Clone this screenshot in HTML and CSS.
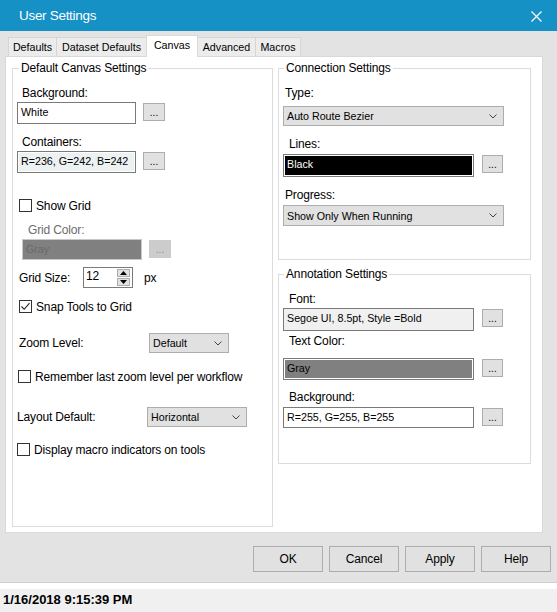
FILE: index.html
```html
<!DOCTYPE html>
<html lang="en">
<head>
  <meta charset="UTF-8" />
  <title>User Settings</title>
  <link rel="stylesheet" href="styles.css">
</head>
<body>

  <div class="titlebar">
    <span class="title">User Settings</span>
    <svg class="close" width="11" height="11" viewBox="0 0 11 11"><path d="M0.5 0.5 L10.5 10.5 M10.5 0.5 L0.5 10.5" stroke="#fff" stroke-width="1.2" fill="none"/></svg>
  </div>

  <div class="dialog">
    <div class="tabs">
      <div class="tab tab-defaults">Defaults</div>
      <div class="tab tab-dataset">Dataset Defaults</div>
      <div class="tab tab-canvas active">Canvas</div>
      <div class="tab tab-advanced">Advanced</div>
      <div class="tab tab-macros">Macros</div>
    </div>

    <div class="panel">
      <div class="group group-canvas">
        <div class="legend legend-left">Default Canvas Settings</div>

        <div class="lbl lbl-bg">Background:</div>
        <div class="field-row fr-bg">
          <div class="colorbox box-white w119">White</div>
          <div class="dots">...</div>
        </div>

        <div class="lbl lbl-bg">Containers:</div>
        <div class="field-row fr-bg">
          <div class="colorbox box-containers w119">R=236, G=242, B=242</div>
          <div class="dots">...</div>
        </div>

        <div class="check-row cr-showgrid">
          <span class="check"></span>
          <span>Show Grid</span>
        </div>

        <div class="lbl lbl-gridcolor disabled">Grid Color:</div>
        <div class="field-row fr-gridcolor">
          <div class="colorbox box-disabled">Gray</div>
          <div class="dots dots-disabled">...</div>
        </div>

        <div class="option-row or-gridsize">
          <span class="opt-label w64">Grid Size:</span>
          <div class="spin">
            <span class="spin-value">12</span>
            <div class="spin-buttons">
              <div class="spin-btn"><svg width="7" height="4" viewBox="0 0 7 4"><path d="M3.5 0 L7 4 L0 4 Z" fill="#000"/></svg></div>
              <div class="spin-btn"><svg width="7" height="4" viewBox="0 0 7 4"><path d="M0 0 L7 0 L3.5 4 Z" fill="#000"/></svg></div>
            </div>
          </div>
          <span class="unit">px</span>
        </div>

        <div class="check-row cr-snap">
          <span class="check"><svg width="11" height="11" viewBox="0 0 11 11"><path d="M1.5 5.5 L4.2 8.3 L9.5 2.2" stroke="#222" stroke-width="1.1" fill="none"/></svg></span>
          <span>Snap Tools to Grid</span>
        </div>

        <div class="option-row or-zoom">
          <span class="opt-label w130">Zoom Level:</span>
          <div class="select w80">
            <span>Default</span>
            <svg width="8" height="5" viewBox="0 0 8 5"><path d="M0.5 0.5 L4 4 L7.5 0.5" stroke="#444" fill="none"/></svg>
          </div>
        </div>

        <div class="check-row cr-remember">
          <span class="check"></span>
          <span>Remember last zoom level per workflow</span>
        </div>

        <div class="option-row or-layout">
          <span class="opt-label w130">Layout Default:</span>
          <div class="select w100">
            <span>Horizontal</span>
            <svg width="8" height="5" viewBox="0 0 8 5"><path d="M0.5 0.5 L4 4 L7.5 0.5" stroke="#444" fill="none"/></svg>
          </div>
        </div>

        <div class="check-row cr-display">
          <span class="check"></span>
          <span>Display macro indicators on tools</span>
        </div>
      </div>

      <div class="col-right">
        <div class="group group-conn">
          <div class="legend legend-right">Connection Settings</div>

          <div class="lbl lbl-type">Type:</div>
          <div class="select w221 sel-type">
            <span>Auto Route Bezier</span>
            <svg width="8" height="5" viewBox="0 0 8 5"><path d="M0.5 0.5 L4 4 L7.5 0.5" stroke="#444" fill="none"/></svg>
          </div>

          <div class="lbl lbl-lines">Lines:</div>
          <div class="field-row fr-lines">
            <div class="colorbox box-black w191">Black</div>
            <div class="dots dots-right">...</div>
          </div>

          <div class="lbl lbl-type">Progress:</div>
          <div class="select w221 sel-progress">
            <span>Show Only When Running</span>
            <svg width="8" height="5" viewBox="0 0 8 5"><path d="M0.5 0.5 L4 4 L7.5 0.5" stroke="#444" fill="none"/></svg>
          </div>
        </div>

        <div class="group group-annot">
          <div class="legend legend-right">Annotation Settings</div>

          <div class="lbl lbl-font">Font:</div>
          <div class="field-row fr-font">
            <div class="colorbox box-font w191">Segoe UI, 8.5pt, Style =Bold</div>
            <div class="dots dots-right">...</div>
          </div>

          <div class="lbl lbl-textcolor">Text Color:</div>
          <div class="field-row fr-textcolor">
            <div class="colorbox box-gray w191">Gray</div>
            <div class="dots dots-right">...</div>
          </div>

          <div class="lbl lbl-annbg">Background:</div>
          <div class="field-row fr-annbg">
            <div class="colorbox box-white w191">R=255, G=255, B=255</div>
            <div class="dots dots-right">...</div>
          </div>
        </div>
      </div>
    </div>

    <div class="buttons">
      <button class="btn">OK</button>
      <button class="btn">Cancel</button>
      <button class="btn">Apply</button>
      <button class="btn">Help</button>
    </div>
  </div>

  <div class="gap-strip"></div>
  <div class="statusbar">1/16/2018 9:15:39 PM</div>

</body>
</html>
```

FILE: styles.css
```css
body {
  margin: 0;
  width: 557px;
  height: 612px;
  overflow: hidden;
  font-family: "Liberation Sans", Arial, sans-serif;
  font-size: 12px;
  letter-spacing: -0.15px;
  color: #000;
  background-color: #f0f0f0;
}
.titlebar {
  height: 31px;
  background-color: #1591c6;
  display: flex;
  align-items: center;
  justify-content: space-between;
  padding: 0 15px 0 19px;
}
.title {
  color: #fff;
  font-size: 13.5px;
  letter-spacing: -0.3px;
  margin-top: -1px;
}
.close {
  margin-top: 1px;
}
.dialog {
  height: 551px;
  background-color: #e3e3e3;
  border-bottom: 1px solid #cfcfcf;
}
.tabs {
  display: flex;
  align-items: flex-end;
  height: 21px;
  padding: 4px 0 0 9px;
}
.tab {
  height: 19px;
  box-sizing: border-box;
  border: 1px solid #d6d6d6;
  border-bottom: none;
  background-color: #ececec;
  font-size: 10.7px;
  letter-spacing: 0;
  line-height: 18px;
  text-align: center;
  margin-left: -1px;
}
.tab.active {
  height: 22px;
  margin-bottom: -1px;
  background-color: #fff;
  border-color: #d9d9d9;
  line-height: 19px;
  position: relative;
  z-index: 1;
}
.tab-defaults { width: 49px; }
.tab-dataset { width: 91px; }
.tab-canvas { width: 52px; }
.tab-advanced { width: 59px; }
.tab-macros { width: 46px; }

.panel {
  display: flex;
  width: 538px;
  height: 477px;
  box-sizing: border-box;
  margin-left: 5px;
  padding: 11px 0 0 6px;
  background-color: #fff;
  border: 1px solid #d9d9d9;
}
.group {
  box-sizing: border-box;
  border: 1px solid #dcdcdc;
}
.group-canvas {
  width: 261px;
  height: 459px;
}
.col-right {
  margin-left: 5px;
  width: 253px;
}
.group-conn {
  height: 192px;
}
.group-annot {
  height: 190px;
  margin-top: 14px;
}
.legend {
  width: fit-content;
  margin-top: -8px;
  padding: 0 2px;
  line-height: 14px;
  background-color: #fff;
}
.legend-left { margin-left: 6px; }
.legend-right { margin-left: 5px; }

.lbl {
  line-height: 14px;
  height: 14px;
}
.lbl.disabled { color: #6d6d6d; }
.lbl-bg { margin: 11px 0 0 9px; }
.lbl-gridcolor { margin: 11px 0 0 15px; }
.lbl-type { margin: 11px 0 0 6px; }
.lbl-lines { margin: 11px 0 0 10px; }
.lbl-font { margin: 11px 0 0 10px; }
.lbl-textcolor { margin: 3px 0 0 10px; }
.lbl-annbg { margin: 10px 0 0 10px; }

.field-row {
  display: flex;
  align-items: flex-start;
}
.fr-bg { margin: 2px 0 0 4px; }
.fr-gridcolor { margin: 2px 0 0 9px; }
.fr-lines { margin: 3px 0 0 4px; }
.fr-font { margin: 2px 0 0 4px; }
.fr-textcolor { margin: 10px 0 0 4px; }
.fr-annbg { margin: 3px 0 0 4px; }

.colorbox {
  box-sizing: border-box;
  height: 22px;
  border: 1px solid #7a7a7a;
  box-shadow: inset 0 0 0 1px #fff;
  padding-left: 3px;
  font-size: 10.7px;
  letter-spacing: 0;
  line-height: 19px;
  white-space: nowrap;
  overflow: hidden;
}
.w119 { width: 119px; }
.w191 { width: 191px; }
.box-white { background-color: #fff; }
.box-containers { background-color: #ecf2f2; }
.box-black { background-color: #000; color: #fff; height: 23px; }
.box-font { background-color: #f0f0f0; height: 23px; box-shadow: none; }
.box-gray { background-color: #808080; }
.box-disabled {
  width: 120px;
  height: 21px;
  background-color: #808080;
  border-color: #c8c8c8;
  box-shadow: none;
  color: #6a6a6a;
}
.fr-annbg .colorbox { height: 21px; }

.dots {
  box-sizing: border-box;
  width: 22px;
  height: 18px;
  margin: 1px 0 0 7px;
  background-color: #e1e1e1;
  border: 1px solid #adadad;
  font-size: 10px;
  letter-spacing: 0;
  line-height: 17px;
  text-align: center;
}
.dots-right {
  width: 21px;
  margin-left: 8px;
}
.dots-disabled {
  background-color: #cccccc;
  border-color: #cccccc;
  color: #8a8a8a;
}

.check-row {
  display: flex;
  align-items: center;
  height: 13px;
  gap: 4px;
}
.check {
  box-sizing: border-box;
  width: 13px;
  height: 13px;
  border: 1px solid #333;
  background-color: #fff;
  display: flex;
  align-items: center;
  justify-content: center;
}
.cr-showgrid { margin: 26px 0 0 6px; }
.cr-snap { margin: 12px 0 0 6px; }
.cr-remember { margin: 17px 0 0 5px; }
.cr-display { margin: 16px 0 0 4px; }

.option-row {
  display: flex;
  align-items: center;
}
.or-gridsize { margin: 7px 0 0 6px; }
.or-zoom { margin: 20px 0 0 6px; }
.or-layout { margin: 24px 0 0 4px; }
.opt-label { flex: none; }
.w64 { width: 64px; }
.w130 { width: 130px; }
.unit { margin-left: 11px; }

.spin {
  box-sizing: border-box;
  width: 50px;
  height: 21px;
  border: 1px solid #7a7a7a;
  display: flex;
  justify-content: space-between;
}
.spin-value {
  padding: 1px 0 0 2px;
  line-height: 14px;
}
.spin-buttons {
  margin: 1px 2px 0 0;
}
.spin-btn {
  box-sizing: border-box;
  width: 13px;
  height: 8px;
  margin-bottom: 1px;
  background-color: #e1e1e1;
  border: 1px solid #adadad;
  display: flex;
  align-items: center;
  justify-content: center;
}

.select {
  box-sizing: border-box;
  height: 20px;
  display: flex;
  align-items: center;
  justify-content: space-between;
  padding: 0 6px 0 3px;
  background-color: #e1e1e1;
  border: 1px solid #adadad;
  font-size: 10.7px;
  letter-spacing: 0;
}
.w80 { width: 80px; }
.w100 { width: 100px; }
.w221 { width: 221px; }
.sel-type { margin: 6px 0 0 4px; }
.sel-progress { margin: 3px 0 0 4px; height: 21px; }

.buttons {
  display: flex;
  justify-content: flex-end;
  gap: 6px;
  margin-top: 13px;
  padding-right: 6px;
}
.btn {
  width: 70px;
  height: 26px;
  background-color: #e1e1e1;
  border: 1px solid #adadad;
  font-family: "Liberation Sans", Arial, sans-serif;
  font-size: 12px;
  letter-spacing: -0.15px;
  color: #000;
  padding: 0;
}

.gap-strip {
  height: 6px;
  background-color: #fff;
}
.statusbar {
  height: 23px;
  padding-left: 3px;
  font-size: 13px;
  font-weight: bold;
  letter-spacing: 0;
  line-height: 22px;
  background-color: #f0f0f0;
}
```
